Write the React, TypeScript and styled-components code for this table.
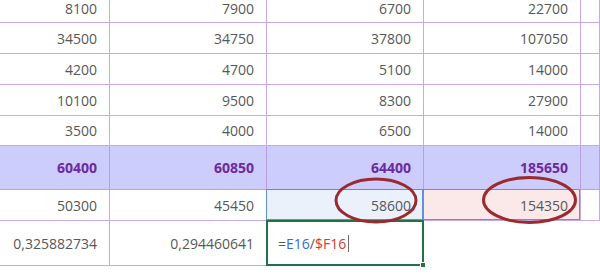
import styled, { createGlobalStyle, css } from "styled-components";

const GlobalStyle = createGlobalStyle`
  html, body {
    margin: 0;
    padding: 0;
    background: #ffffff;
  }
  body {
    font-family: "Open Sans", "Liberation Sans", sans-serif;
  }
`;

const GRID = "#c7a8e4";

type Kind = "plain" | "total" | "refBlue" | "refRed" | "active" | "blank";

const Frame = styled.div`
  position: relative;
  width: 600px;
  height: 276px;
  overflow: hidden;
`;

const Sheet = styled.div`
  display: grid;
  grid-template-columns: 110px 157px 157px 157px 1fr;
`;

const Cell = styled.div<{ kind?: Kind; h: number; clipped?: boolean }>`
  position: relative;
  box-sizing: border-box;
  height: ${(p) => p.h}px;
  display: flex;
  align-items: center;
  justify-content: flex-end;
  padding: 0 12px 0 4px;
  border-right: 1px solid ${GRID};
  border-bottom: 1px solid ${GRID};
  font-size: 14px;
  color: #575757;
  white-space: nowrap;

  ${(p) =>
    p.clipped &&
    css`
      padding-bottom: 5px;
      line-height: 15px;
    `}

  ${(p) =>
    p.kind === "total" &&
    css`
      background: #ccccfd;
      color: #6c2a9e;
      font-weight: 700;
      border-right-color: #bb9ee6;
      border-bottom-color: #bb9ee6;
    `}

  ${(p) =>
    p.kind === "refBlue" &&
    css`
      background: #eaf1fb;
      &::after {
        content: "";
        position: absolute;
        top: -1px;
        left: -1px;
        right: 0;
        bottom: 0;
        border: 1px solid #5d8ddb;
        z-index: 1;
      }
    `}

  ${(p) =>
    p.kind === "refRed" &&
    css`
      background: #fbe8e8;
      &::after {
        content: "";
        position: absolute;
        top: -1px;
        left: -1px;
        right: 0;
        bottom: 0;
        border: 1px solid #d86b6d;
        z-index: 2;
      }
    `}

  ${(p) =>
    p.kind === "active" &&
    css`
      justify-content: flex-start;
      padding: 0 0 0 11px;
      &::after {
        content: "";
        position: absolute;
        top: -1px;
        left: -1px;
        right: -1px;
        bottom: -1px;
        border: 2px solid #217346;
        z-index: 3;
      }
      &::before {
        content: "";
        position: absolute;
        right: -3px;
        bottom: -3px;
        width: 4px;
        height: 4px;
        background: #217346;
        border: 1px solid #ffffff;
        z-index: 4;
      }
    `}

  ${(p) =>
    p.kind === "blank" &&
    css`
      border-right-color: transparent;
      border-bottom-color: transparent;
    `}
`;

const Ref = styled.span<{ tone: "blue" | "red" | "plain" }>`
  color: ${(p) =>
    p.tone === "blue" ? "#2f6fd6" : p.tone === "red" ? "#d23a3a" : "#575757"};
`;

const Caret = styled.span`
  display: inline-block;
  width: 0;
  height: 17px;
  margin-left: 2px;
  border-left: 1px solid #6b6b6b;
`;

const Marks = styled.svg`
  position: absolute;
  inset: 0;
  pointer-events: none;
  z-index: 5;
`;

// the first row is cut by the top edge of the window
const rows: { h: number; kind?: Kind; clipped?: boolean; values: string[] }[] = [
  { h: 23, clipped: true, values: ["8100", "7900", "6700", "22700", ""] },
  { h: 31, values: ["34500", "34750", "37800", "107050", ""] },
  { h: 31, values: ["4200", "4700", "5100", "14000", ""] },
  { h: 31, values: ["10100", "9500", "8300", "27900", ""] },
  { h: 30, values: ["3500", "4000", "6500", "14000", ""] },
  { h: 44, kind: "total", values: ["60400", "60850", "64400", "185650", ""] },
];

export default function App() {
  return (
    <>
      <GlobalStyle />
      <Frame>
        <Sheet>
          {rows.map((r, i) =>
            r.values.map((v, j) => (
              <Cell key={`${i}-${j}`} h={r.h} kind={r.kind} clipped={r.clipped}>
                {v}
              </Cell>
            ))
          )}

          <Cell h={31}>50300</Cell>
          <Cell h={31}>45450</Cell>
          <Cell h={31} kind="refBlue">58600</Cell>
          <Cell h={31} kind="refRed">154350</Cell>
          <Cell h={31} />

          <Cell h={45}>0,325882734</Cell>
          <Cell h={45}>0,294460641</Cell>
          <Cell h={45} kind="active">
            <Ref tone="plain">=</Ref>
            <Ref tone="blue">E16</Ref>
            <Ref tone="plain">/</Ref>
            <Ref tone="red">$F16</Ref>
            <Caret />
          </Cell>
          <Cell h={45} kind="blank" />
          <Cell h={45} kind="blank" />
        </Sheet>

        <Marks width="600" height="276" viewBox="0 0 600 276">
          <ellipse cx="376" cy="200.5" rx="40" ry="21.5" fill="none" stroke="#9b2a2e" strokeWidth="3" />
          <ellipse cx="529.5" cy="200" rx="46" ry="22.5" fill="none" stroke="#9b2a2e" strokeWidth="3" />
        </Marks>
      </Frame>
    </>
  );
}
